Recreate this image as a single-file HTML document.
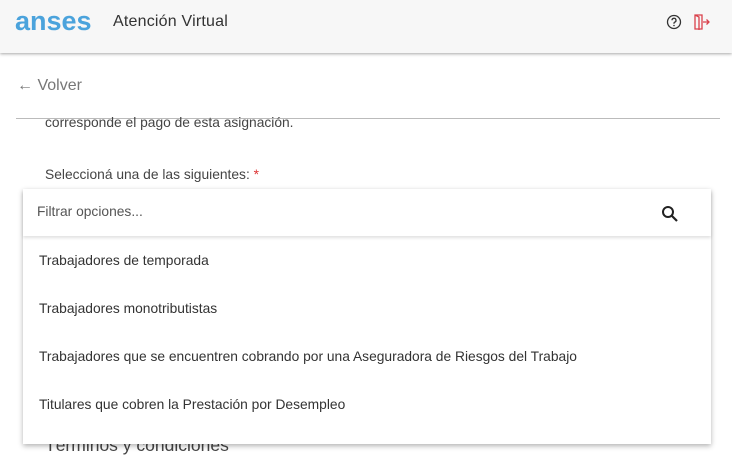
<!DOCTYPE html>
<html><head><meta charset="utf-8"><style>
*{margin:0;padding:0;box-sizing:border-box}
body{width:732px;height:470px;overflow:hidden;background:#fff;font-family:"Liberation Sans",sans-serif;position:relative;color:#333}
.hdr{position:absolute;left:0;top:0;width:732px;height:53px;background:#f7f7f7;box-shadow:0 1px 3px rgba(0,0,0,.35);z-index:2}
.logo{position:absolute;left:15px;top:6px;font-size:27px;font-weight:bold;color:#4ba3dc;letter-spacing:0px}
.title{position:absolute;left:113px;top:13px;font-size:16px;color:#333;letter-spacing:0.2px}
.abs{position:absolute;white-space:nowrap}
.panel{position:absolute;left:23px;top:189px;width:688px;height:255px;background:#fff;box-shadow:0 2px 5px rgba(0,0,0,.3);z-index:3}
.filt{position:absolute;left:0;top:0;width:688px;height:47px;box-shadow:0 2px 3px rgba(0,0,0,.12);background:#fff}
.opt{position:absolute;left:16px;font-size:13.8px;color:#333}
</style></head><body>
<div class="hdr"><div class="logo">anses</div><div class="title">Atención Virtual</div>
<svg class="abs" style="left:666px;top:14px" width="16" height="16" viewBox="0 0 16 16"><circle cx="8" cy="8" r="6.5" fill="none" stroke="#333" stroke-width="1.3"/><path d="M6 6.3a2 2 0 1 1 2.6 1.9c-.5.2-.6.5-.6 1v.6" fill="none" stroke="#333" stroke-width="1.3"/><circle cx="8" cy="11.5" r=".8" fill="#333"/></svg>
<svg class="abs" style="left:693px;top:13px" width="18" height="18" viewBox="0 0 18 18"><path d="M2 2h7v14H2z M2 2l4 2v13" fill="none" stroke="#d9414b" stroke-width="1.3"/><path d="M10 9h6M13.5 6.5L16 9l-2.5 2.5" fill="none" stroke="#d9414b" stroke-width="1.3"/></svg>
</div>
<div class="abs" style="left:17px;top:77px;font-size:16px;color:#777">← Volver</div>
<div class="abs" style="left:16px;top:118px;width:704px;height:1px;background:#bbb"></div>
<div class="abs" style="left:45px;top:115px;font-size:13.8px;color:#444">corresponde el pago de esta asignación.</div>
<div class="abs" style="left:45px;top:167px;font-size:13.8px;color:#444">Seleccioná una de las siguientes: <span style="color:#d33">*</span></div>
<div class="abs" style="left:45px;top:435px;font-size:17.5px;color:#444">Términos y condiciones</div>
<div class="panel">
<div class="filt"><div class="abs" style="left:14px;top:15px;font-size:13.8px;color:#555">Filtrar opciones...</div>
<svg class="abs" style="left:638px;top:16px" width="18" height="18" viewBox="0 0 18 18"><circle cx="7" cy="7" r="5" fill="none" stroke="#222" stroke-width="2"/><path d="M10.5 10.5L16 16" stroke="#222" stroke-width="2.2"/></svg></div>
<div class="opt" style="top:64px">Trabajadores de temporada</div>
<div class="opt" style="top:112px">Trabajadores monotributistas</div>
<div class="opt" style="top:160px">Trabajadores que se encuentren cobrando por una Aseguradora de Riesgos del Trabajo</div>
<div class="opt" style="top:208px">Titulares que cobren la Prestación por Desempleo</div>
</div>
</body></html>
